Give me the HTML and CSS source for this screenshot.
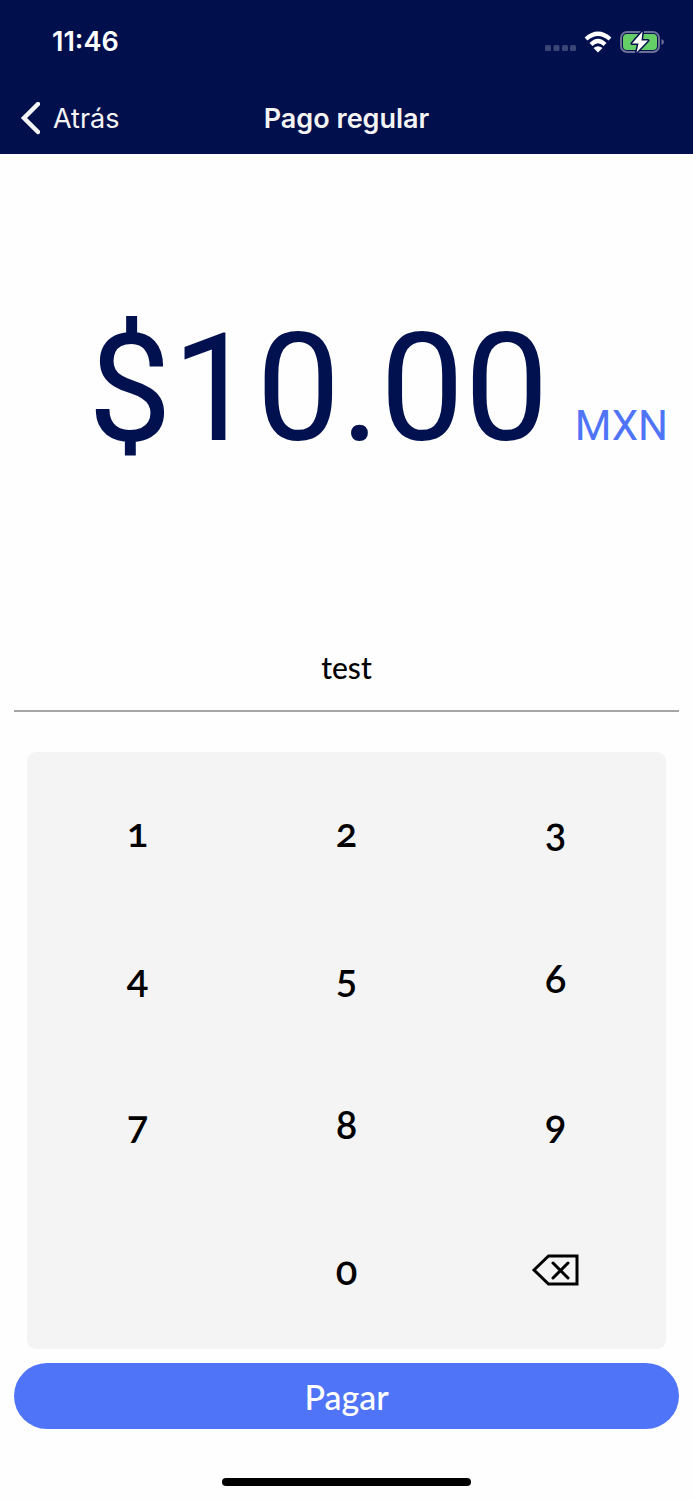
FILE: index.html
```
<!DOCTYPE html>
<html lang="es-MX">
<head>
    <meta charset="UTF-8">
    <meta name="viewport" content="width=device-width, initial-scale=1.0">
    <title>Pago regular</title>
    <link rel="stylesheet" href="styles.css">
</head>
<body>
    <header class="header">
        <div class="status-bar">
            <time class="clock">11:46</time>
            <div class="status-icons">
                <svg class="signal" width="32" height="8" viewBox="0 0 32 8" aria-hidden="true">
                    <rect x="1" y="1" width="6" height="6" rx="1.500"/>
                    <rect x="9.500" y="1" width="6" height="6" rx="1.500"/>
                    <rect x="18" y="1" width="6" height="6" rx="1.500"/>
                    <rect x="26" y="1" width="6" height="6" rx="1.500"/>
                </svg>
                <svg width="28" height="22" viewBox="0 0 28 22" aria-hidden="true">
                    <g fill="none" stroke="#fff" stroke-width="4.200">
                        <path d="M2 8Q14 -2.500 26 8"/>
                        <path d="M7 13.500Q14 6.500 21 13.500"/>
                    </g>
                    <path d="M9.500 17Q14 13.500 18.500 17L14 21.500Z" fill="#fff"/>
                </svg>
                <svg width="45" height="24" viewBox="0 0 45 24" aria-hidden="true">
                    <rect x="1" y="2" width="38" height="20" rx="6" fill="none" stroke="#6b7196" stroke-width="2"/>
                    <rect x="3" y="4" width="34" height="16" rx="4" fill="#65ce67"/>
                    <path d="M41.500 9Q44 10 44 12T41.500 15Z" fill="#6b7196"/>
                    <path d="M22.500 1.500L12 13.500H18.500L16.500 22.500L28 10.500H21.500Z" fill="#fff" stroke="#010f4c" stroke-width="3" stroke-linejoin="round" paint-order="stroke"/>
                </svg>
            </div>
        </div>
        <nav class="nav-bar">
            <a href="#" class="back">
                <svg width="20" height="34" viewBox="0 0 20 34" aria-hidden="true">
                    <path d="M18 2L4 16L18 30" fill="none" stroke="#f4f4f4" stroke-width="4.500" stroke-linecap="round"/>
                </svg>
                Atrás
            </a>
            <h1 class="title">Pago regular</h1>
        </nav>
    </header>
    <main class="payment">
        <p class="amount">$10.00 <span class="currency">MXN</span></p>
        <input class="concept" type="text" value="test" aria-label="Concepto">
        <div class="keypad">
            <button type="button" class="key">1</button>
            <button type="button" class="key">2</button>
            <button type="button" class="key">3</button>
            <button type="button" class="key">4</button>
            <button type="button" class="key">5</button>
            <button type="button" class="key">6</button>
            <button type="button" class="key">7</button>
            <button type="button" class="key">8</button>
            <button type="button" class="key">9</button>
            <button type="button" class="key key-zero">0</button>
            <button type="button" class="key" aria-label="Borrar">
                <svg class="erase" width="54" height="32" viewBox="0 0 54 32" aria-hidden="true">
                    <path d="M5 16L19.500 2H48V30H19.500Z"/>
                    <path d="M24 9L39 24M39 9L24 24" stroke-linecap="round"/>
                </svg>
            </button>
        </div>
        <button type="button" class="pay-button">Pagar</button>
    </main>
    <div class="home-indicator"></div>
</body>
</html>
```
FILE: styles.css
```
* {
    box-sizing: border-box;
}
body {
    display: flex;
    flex-direction: column;
    min-height: 100vh;
    margin: 0;
    background-color: #fefefe;
    font-family: Lato, sans-serif;
    color: #000;
}
.header {
    background-color: #010f4c;
    color: #fff;
    font-family: Inter, sans-serif;
    font-size: 27px;
}
.status-bar {
    display: flex;
    justify-content: space-between;
    align-items: center;
    height: 83px;
    padding: 0 28px 0 52px;
}
.clock {
    font-weight: 600;
}
.status-icons {
    display: flex;
    align-items: center;
    gap: 8px;
}
.signal {
    margin-top: 12px;
    fill: #3c4577;
}
.nav-bar {
    display: grid;
    grid-template-columns: 1fr auto 1fr;
    align-items: center;
    height: 71px;
    padding: 0 20px;
    color: #f4f4f4;
}
.back {
    display: flex;
    align-items: center;
    gap: 13px;
    color: inherit;
    text-decoration: none;
}
.title {
    margin: 0;
    font-size: 27px;
    font-weight: 600;
}
.payment {
    display: flex;
    flex: 1;
    flex-direction: column;
    padding: 0 14px;
}
.amount {
    display: flex;
    flex: 1;
    justify-content: flex-end;
    align-items: baseline;
    align-content: center;
    flex-wrap: wrap;
    gap: 26px;
    margin: 0;
    padding-right: 11px;
    font-family: Roboto, sans-serif;
    font-size: 150px;
    line-height: 178px;
    color: #01104e;
}
.currency {
    font-size: 42px;
    line-height: 48px;
    color: #4f74f8;
}
.concept {
    height: 88px;
    padding: 0;
    border: 0;
    border-bottom: 2px solid #a5a5a5;
    background: none;
    font: 500 30px Lato, sans-serif;
    text-align: center;
}
.keypad {
    display: grid;
    grid-template-columns: repeat(3, 1fr);
    grid-auto-rows: 146px;
    margin: 40px 13px 14px;
    padding: 7px 6px 6px;
    border-radius: 9px;
    background-color: #f4f4f4;
}
.key {
    display: flex;
    justify-content: center;
    align-items: center;
    padding: 0;
    border: 0;
    background: none;
    font: 600 40px Lato, sans-serif;
    font-variant-numeric: oldstyle-nums;
    color: #000;
}
.key-zero {
    grid-column: 2;
}
.erase {
    fill: none;
    stroke: #000;
    stroke-width: 3;
}
.pay-button {
    height: 66px;
    border: 0;
    border-radius: 33px;
    background-color: #4f74f8;
    font: 500 34px Lato, sans-serif;
    color: #fff;
}
.home-indicator {
    align-self: center;
    width: 36%;
    height: 8px;
    margin: 49px 0 14px;
    border-radius: 4px;
    background-color: #000;
}
```
